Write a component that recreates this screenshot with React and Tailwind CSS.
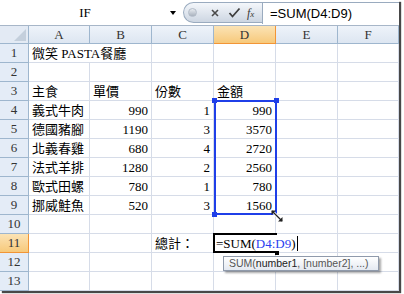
import React from "react";

const serif = { fontFamily: '"Liberation Serif", "Noto Sans CJK TC", serif' };

const colW = ["w-[61px]", "w-[62px]", "w-[62px]", "w-[62px]", "w-[62px]", "w-[61px]"];
const letters = ["A", "B", "C", "D", "E", "F"];

const rows = [
  [{ t: "微笑 PASTA餐廳", spill: true }],
  [],
  [{ t: "主食" }, { t: "單價" }, { t: "份數" }, { t: "金額" }],
  [{ t: "義式牛肉" }, { t: "990", r: true }, { t: "1", r: true }, { t: "990", r: true }],
  [{ t: "德國豬腳" }, { t: "1190", r: true }, { t: "3", r: true }, { t: "3570", r: true }],
  [{ t: "北義春雞" }, { t: "680", r: true }, { t: "4", r: true }, { t: "2720", r: true }],
  [{ t: "法式羊排" }, { t: "1280", r: true }, { t: "2", r: true }, { t: "2560", r: true }],
  [{ t: "歐式田螺" }, { t: "780", r: true }, { t: "1", r: true }, { t: "780", r: true }],
  [{ t: "挪威鮭魚" }, { t: "520", r: true }, { t: "3", r: true }, { t: "1560", r: true }],
  [],
  [{}, {}, { t: "總計：" }],
  [],
  [],
];

function FormulaBar() {
  return (
    <div className="flex h-[26px] border-b border-[#a7b6c8] bg-white">
      <div className="flex w-[170px] items-center justify-center text-[13px] text-black" style={serif}>
        IF
      </div>
      <div className="flex w-[13px] items-center">
        <div className="h-0 w-0 border-x-[3px] border-t-[4px] border-x-transparent border-t-black" />
      </div>
      <div className="mt-[2px] flex h-[21px] w-[79px] items-center rounded-l-full border border-r-0 border-[#9aabbf] bg-gradient-to-b from-[#f4f7fb] to-[#cdd6e2] pl-[4px]">
        <div className="h-[9px] w-[9px] rounded-full border border-[#b3bcc8] bg-gradient-to-b from-[#e8ecf1] to-[#a9b2be]" />
        <svg width="10" height="10" viewBox="0 0 10 10" className="ml-[13px]">
          <path d="M2 2 L8 8 M8 2 L2 8" stroke="#4a4a4a" strokeWidth="1.6" />
        </svg>
        <svg width="13" height="11" viewBox="0 0 13 11" className="ml-[8px]">
          <path d="M1.5 6 L4.5 9.5 L11.5 1.5" stroke="#3e3e3e" strokeWidth="1.8" fill="none" />
        </svg>
        <span className="ml-[6px] text-[12px] italic text-[#3a3a3a]" style={serif}>
          f<span className="text-[9px]">x</span>
        </span>
      </div>
      <div
        className="mt-[2px] flex h-[22px] flex-1 items-center border-l border-t border-[#9aabbf] pl-[7px] text-[13px] text-black"
        style={{ fontFamily: '"Liberation Sans", sans-serif' }}
      >
        =SUM(D4:D9)
      </div>
    </div>
  );
}

function HeaderRow() {
  return (
    <div className="flex h-[18px]" style={serif}>
      <div className="flex w-[29px] items-end justify-end border-r border-b border-[#9eb6ce] bg-[#e3eaf4] p-[2px]">
        <svg width="12" height="12" viewBox="0 0 12 12">
          <path d="M12 0 L12 12 L0 12 Z" fill="#c4cfdc" />
        </svg>
      </div>
      {letters.map((l, i) => (
        <div
          key={l}
          className={`${colW[i]} flex items-center justify-center border-r border-b text-[13px] ${
            l === "D"
              ? "border-[#f29536] bg-gradient-to-b from-[#fbe3b5] to-[#f7c97a] text-[#333]"
              : "border-[#9eb6ce] bg-gradient-to-b from-[#eef3fa] to-[#dde6f1] text-[#333]"
          }`}
        >
          {l}
        </div>
      ))}
    </div>
  );
}

function DataRow({ n, cells }) {
  const active = n === 11;
  return (
    <div className="flex h-[19px]" style={serif}>
      <div
        className={`flex w-[29px] items-center justify-center border-r border-b text-[13px] text-[#333] ${
          active ? "border-[#f29536] bg-gradient-to-b from-[#fbe3b5] to-[#f7c97a]" : "border-[#9eb6ce] bg-[#e4ecf7]"
        }`}
      >
        {n}
      </div>
      {colW.map((w, i) => {
        const c = cells[i] || {};
        return (
          <div
            key={i}
            className={`${w} flex items-end whitespace-nowrap border-b border-[#d6dce8] px-[3px] pb-[1px] text-[13px] leading-[15px] text-black ${
              c.spill ? "relative z-10 overflow-visible" : "overflow-hidden border-r"
            } ${c.r ? "justify-end" : "justify-start"}`}
          >
            {c.t}
          </div>
        );
      })}
    </div>
  );
}

export default function App() {
  return (
    <div className="h-[294px] w-[404px] bg-white">
      <div className="relative h-[291px] w-[399px] bg-white shadow-[2px_2px_1px_rgba(40,40,40,0.85)]">
        <FormulaBar />
        <div className="relative">
          <HeaderRow />
          {rows.map((cells, i) => (
            <DataRow key={i} n={i + 1} cells={cells} />
          ))}

          {/* range highlight D4:D9 */}
          <div className="absolute left-[214px] top-[74px] h-[115px] w-[63px] border-2 border-[#1f3fe8]" />
          <div className="absolute left-[212px] top-[72px] h-[5px] w-[5px] bg-[#1f3fe8]" />
          <div className="absolute left-[274px] top-[72px] h-[5px] w-[5px] bg-[#1f3fe8]" />
          <div className="absolute left-[212px] top-[186px] h-[5px] w-[5px] bg-[#1f3fe8]" />
          <svg className="absolute left-[270px] top-[183px]" width="14" height="14" viewBox="0 0 14 14">
            <path d="M2 2 L12 12" stroke="#fff" strokeWidth="3" />
            <path d="M2 2 L12 12" stroke="#222" strokeWidth="1.3" />
            <path d="M1.5 1.5 L6 1.5 L1.5 6 Z M12.5 12.5 L8 12.5 L12.5 8 Z" fill="#222" />
          </svg>

          {/* editing cell D11 */}
          <div className="absolute left-[213px] top-[207px] h-[20px] w-[64px] border-y-2 border-l-2 border-black bg-white" />
          <div className="absolute left-[275px] top-[225px] h-[4px] w-[4px] bg-black" />
          <div
            className="absolute left-[216px] top-[210px] flex h-[15px] items-end whitespace-nowrap bg-white pr-[1px] text-[13px] leading-[15px] text-black"
            style={serif}
          >
            =SUM(<span className="text-[#2a3ff0]">D4:D9</span>)
            <span className="ml-[1px] h-[15px] w-[1px] bg-black" />
          </div>

          {/* tooltip */}
          <div
            className="absolute left-[223px] top-[230px] flex h-[15px] w-[156px] items-center whitespace-nowrap border border-[#8f9aab] bg-gradient-to-b from-[#ffffff] to-[#e4e9f1] pl-[5px] text-[10.5px] text-[#555] shadow-[2px_2px_2px_rgba(0,0,0,0.35)]"
            style={{ fontFamily: '"Liberation Sans", sans-serif' }}
          >
            SUM(<span className="text-[#222]">number1</span>, [number2], ...)
          </div>
        </div>
      </div>
    </div>
  );
}
